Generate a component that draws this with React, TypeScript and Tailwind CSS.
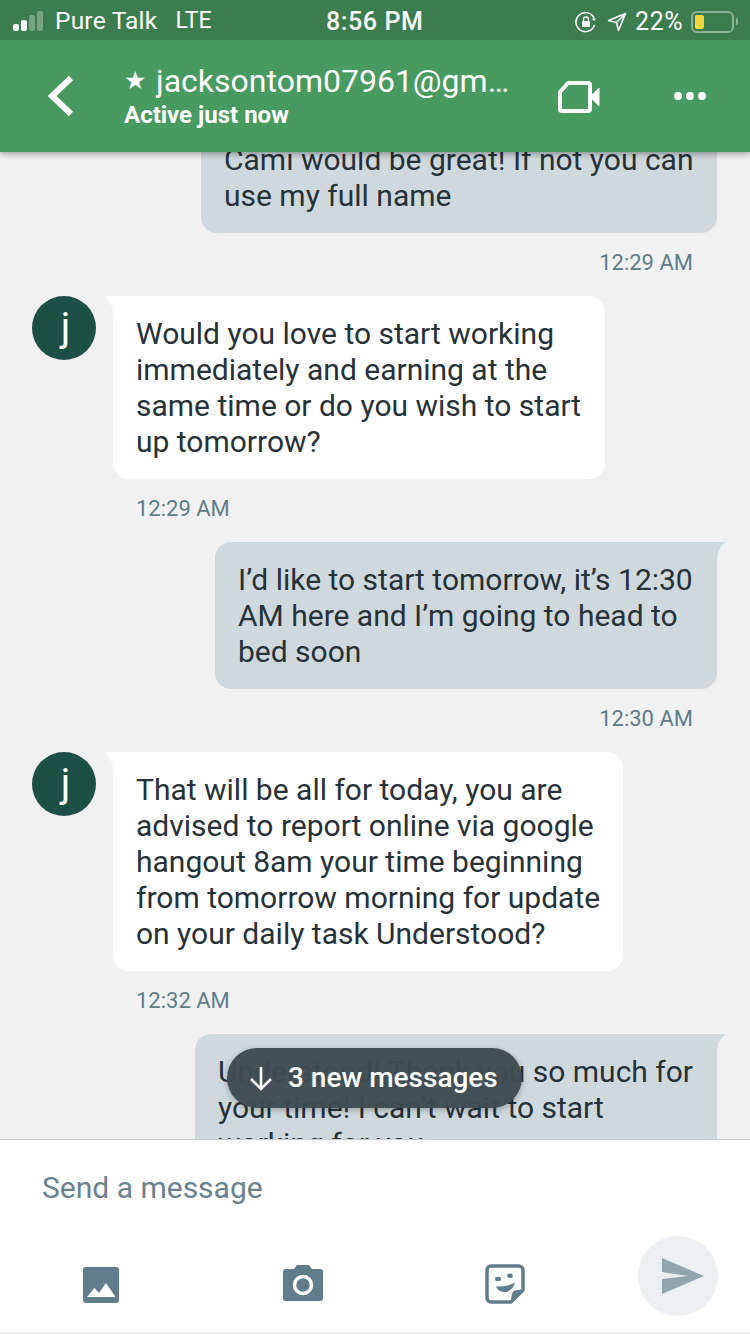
const font = { fontFamily: "Roboto, sans-serif" };

function SentTail() {
  return (
    <svg className="absolute top-0 -right-[9px]" width="10" height="20" viewBox="0 0 10 20">
      <path d="M0 0H10C4 4 1 10 1 20H0Z" fill="#cfd8dc" />
    </svg>
  );
}

function ReceivedTail() {
  return (
    <svg className="absolute top-0 -left-[9px]" width="10" height="20" viewBox="0 0 10 20">
      <path d="M10 0H0C6 4 9 10 9 20H10Z" fill="#ffffff" />
    </svg>
  );
}

function Sent({ width, time, lines }: { width: string; time?: string; lines: string[] }) {
  return (
    <div className="flex flex-col items-end pr-[33px]">
      <div className={`relative bg-[#cfd8dc] rounded-l-2xl rounded-br-2xl px-[23px] py-[19.5px] ${width}`}>
        <SentTail />
        {lines.map((l) => (
          <div key={l} className="whitespace-nowrap">{l}</div>
        ))}
      </div>
      {time && <div className="text-[22px] leading-9 text-[#607d8b] mt-[12px] mb-[15px] pr-[24px]">{time}</div>}
    </div>
  );
}

function Received({ width, time, lines }: { width: string; time: string; lines: string[] }) {
  return (
    <div className="flex pl-[32px] gap-[17px]">
      <div className="w-16 h-16 rounded-full bg-[#1d4f44] text-white flex items-center justify-center pl-[3px] text-[40px] font-normal shrink-0">j</div>
      <div className="flex flex-col">
        <div className={`relative bg-white rounded-r-2xl rounded-bl-2xl px-[23px] py-[19.5px] ${width}`}>
          <ReceivedTail />
          {lines.map((l) => (
            <div key={l} className="whitespace-nowrap">{l}</div>
          ))}
        </div>
        <div className="text-[22px] leading-9 text-[#607d8b] mt-[12px] mb-[15px] pl-[23px]">{time}</div>
      </div>
    </div>
  );
}

export default function App() {
  return (
    <div className="w-[750px] h-[1334px] flex flex-col overflow-hidden bg-[#f1f1f1] text-[#263238]" style={font}>
      {/* status bar */}
      <div className="h-10 shrink-0 bg-[#3c7d4f] text-white text-[25px] flex items-center justify-between pl-[13px] pr-[12px] pt-[3px] relative z-20">
        <div className="flex items-center w-[300px]">
          <div className="flex items-end gap-[2px] h-5 mr-[12px] mt-[-2px]">
            <div className="w-[6px] h-[7px] bg-white rounded-[2px]" />
            <div className="w-[6px] h-[11px] bg-white rounded-[2px]" />
            <div className="w-[6px] h-[16px] bg-white/30 rounded-[2px]" />
            <div className="w-[6px] h-[20px] bg-white/30 rounded-[2px]" />
          </div>
          <span className="text-[24.500px] tracking-[0.2px]">Pure Talk</span>
          <span className="ml-[18px] text-[23px]">LTE</span>
        </div>
        <div className="font-medium tracking-[0.6px] absolute left-[326px]">8:56 PM</div>
        <div className="flex items-center gap-[10px]">
          <svg width="22" height="22" viewBox="0 0 22 22" fill="none" stroke="white" strokeWidth="1.6">
            <path d="M19 7A9.5 9.5 0 1 0 19.5 14" />
            <path d="M17 7.5h4l-2 2.500z" fill="white" stroke="none" />
            <rect x="7" y="10" width="8" height="6" rx="1" fill="white" stroke="none" />
            <path d="M8.500 10V8.500a2.500 2.500 0 0 1 5 0V10" strokeWidth="1.3" />
          </svg>
          <svg width="20" height="20" viewBox="0 0 20 20" fill="none" stroke="white" strokeWidth="1.6" strokeLinejoin="round">
            <path d="M18.500 1.500 1.500 8.500l8 2 2 8z" />
            <path d="M18.500 1.500 9.500 10.500" />
          </svg>
          <span className="text-[25px] -mr-[4px] ml-[-2px] tracking-[0.5px]">22%</span>
          <div className="flex items-center">
            <div className="w-[43px] h-[22px] ml-[2px] rounded-[6px] border-2 border-white/40 p-[2px]">
              <div className="w-[9px] h-full bg-[#f4d63e] rounded-[2px]" />
            </div>
            <div className="w-[2px] h-[7px] bg-white/40 ml-[2px] rounded-r" />
          </div>
        </div>
      </div>

      {/* header */}
      <div className="h-[112px] shrink-0 bg-[#479a60] text-white flex items-center relative z-10 shadow-[0_2px_6px_rgba(0,0,0,0.35)]">
        <svg className="ml-[47px]" width="28" height="42" viewBox="0 0 28 42" fill="none" stroke="white" strokeWidth="6">
          <path d="M24 3 5 21l19 18" />
        </svg>
        <div className="ml-[49px] w-[388px]">
          <div className="flex items-center text-[32px] leading-9">
            <span className="text-[25px] mr-[10px] shrink-0">★</span>
            <span className="truncate w-[356px]">jacksontom07961@gmail.com</span>
          </div>
          <div className="text-[24px] leading-[30px] font-bold mt-[1px]">Active just now</div>
        </div>
        <svg className="ml-[46px] mt-[1px]" width="42" height="34" viewBox="0 0 42 34" fill="none">
          <path d="M10 3H30a2 2 0 0 1 2 2V29a2 2 0 0 1-2 2H4a2 2 0 0 1-2-2V12z" stroke="white" strokeWidth="4" strokeLinejoin="round" />
          <path d="M32 17 41 8V26z" fill="white" stroke="white" strokeWidth="1" />
        </svg>
        <div className="flex gap-[4px] ml-[74px]">
          <div className="w-2 h-2 rounded-full bg-white" />
          <div className="w-2 h-2 rounded-full bg-white" />
          <div className="w-2 h-2 rounded-full bg-white" />
        </div>
      </div>

      {/* messages */}
      <div className="flex-1 min-h-0 overflow-hidden relative text-[30px] leading-9">
        <div className="mt-[-30px]">
          <Sent width="w-[516px]" time="12:29 AM" lines={["Cami would be great! If not you can", "use my full name"]} />
          <Received
            width="w-[492px]"
            time="12:29 AM"
            lines={["Would you love to start working", "immediately and earning at the", "same time or do you wish to start", "up tomorrow?"]}
          />
          <Sent width="w-[502px]" time="12:30 AM" lines={["I’d like to start tomorrow, it’s 12:30", "AM here and I’m going to head to", "bed soon"]} />
          <Received
            width="w-[510px]"
            time="12:32 AM"
            lines={["That will be all for today, you are", "advised to report online via google", "hangout 8am your time beginning", "from tomorrow morning for update", "on your daily task Understood?"]}
          />
          <Sent width="w-[522px]" lines={["Understood! Thank you so much for", "your time! I can’t wait to start", "working for you"]} />
        </div>
        <div className="absolute left-[227px] top-[896px] w-[295px] h-[60px] rounded-[30px] bg-[#3e4b52]/[0.97] text-white flex items-center pl-[20px] shadow-[0_2px_6px_rgba(0,0,0,0.25)]">
          <svg width="28" height="28" viewBox="0 0 28 28" fill="none" stroke="white" strokeWidth="2.600">
            <path d="M14 3V25M4 15l10 10 10-10" />
          </svg>
          <span className="ml-[13px] text-[28px] font-medium whitespace-nowrap">3 new messages</span>
        </div>
      </div>

      {/* composer */}
      <div className="h-[195px] shrink-0 bg-white border-t border-[#c8cdd0] border-b-2 border-b-[#eceff1] flex flex-col relative z-10">
        <div className="pl-[42px] pt-[30px] text-[30px] leading-9 text-[#6b818c]">Send a message</div>
        <div className="flex items-center mt-[30px] h-[80px]">
          <svg className="ml-[83px] mt-[18px]" width="36" height="36" viewBox="0 0 36 36">
            <rect width="36" height="36" rx="3" fill="#607d8b" />
            <path d="M4 30 11.500 21l4.500 5 7-10 9.500 14z" fill="white" />
          </svg>
          <svg className="ml-[164px] mt-[14px]" width="40" height="37" viewBox="0 0 40 37">
            <path d="M3 4H11L14 0H26L29 4H37a3 3 0 0 1 3 3V33a3 3 0 0 1-3 3H3a3 3 0 0 1-3-3V7a3 3 0 0 1 3-3Z" fill="#607d8b" />
            <circle cx="20" cy="20" r="8.500" fill="none" stroke="white" strokeWidth="3.500" />
          </svg>
          <svg className="ml-[162px] mt-[16px]" width="40" height="40" viewBox="0 0 40 40">
            <path d="M6 2H34a4 4 0 0 1 4 4V26L26 38H6a4 4 0 0 1-4-4V6a4 4 0 0 1 4-4Z" fill="none" stroke="#607d8b" strokeWidth="3.500" strokeLinejoin="round" />
            <path d="M38 26C38 26 30 25 28 28S26 38 26 38Z" fill="#607d8b" />
            <ellipse cx="13" cy="15" rx="3" ry="2.200" fill="#607d8b" />
            <ellipse cx="25" cy="11.700" rx="2.800" ry="2.200" fill="#607d8b" />
            <path d="M11 22.300C17 23 25 21.500 30 18.300 29 24 24 28.500 18 28 14 27.500 12 25 11 22.300Z" fill="#607d8b" />
          </svg>
          <div className="ml-[113px] w-20 h-20 rounded-full bg-[#eceff1] flex items-center justify-center">
            <svg className="ml-[10px]" width="42" height="36" viewBox="0 0 42 36">
              <path d="M0 0 42 18 0 36V21L26 18 0 14Z" fill="#90a4ae" />
            </svg>
          </div>
        </div>
      </div>
    </div>
  );
}
